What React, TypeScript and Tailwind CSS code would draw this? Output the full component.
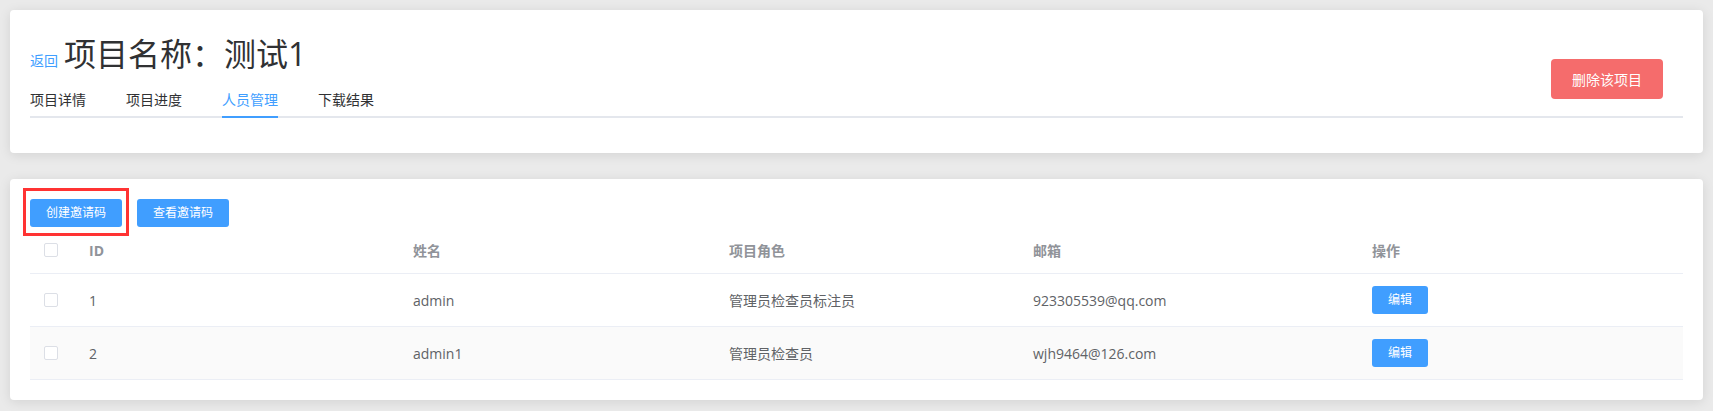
import React from "react";

const rows = [
  { id: "1", name: "admin", role: "管理员检查员标注员", email: "923305539@qq.com", striped: false },
  { id: "2", name: "admin1", role: "管理员检查员", email: "wjh9464@126.com", striped: true },
];

function Checkbox() {
  return <span className="block w-[14px] h-[14px] rounded-[2px] border border-[#dcdfe6] bg-white" />;
}

export default function App() {
  const tabs = ["项目详情", "项目进度", "人员管理", "下载结果"];
  return (
    <div className="min-h-screen bg-[#eaeaea] pt-[10px] font-['Open_Sans','Noto_Sans_CJK_SC',sans-serif]">
      {/* Card 1 */}
      <div className="mx-[10px] bg-white rounded-[4px] shadow-[0_2px_12px_0_rgba(0,0,0,0.1)] px-5 pt-5 pb-[20px]">
        <div className="flex justify-between items-end border-b-2 border-[#e4e7ed] mb-[15px]">
          <div>
            <div className="h-[48px] leading-[48px] flex items-baseline">
              <span className="text-[14px] text-[#409eff] mr-[6px]">返回</span>
              <span className="text-[32px] text-[#303133]">项目名称：测试1</span>
            </div>
            <div className="flex h-[40px] -mb-[2px]">
              {tabs.map((t, i) => (
                <div key={t} className={i === 0 ? "pr-5 h-full" : "px-5 h-full"}>
                  <span
                    className={
                      i === 2
                        ? "h-full flex items-center pt-[4px] text-[14px] text-[#409eff] border-b-2 border-[#409eff]"
                        : "h-full flex items-center pt-[4px] text-[14px] text-[#303133] border-b-2 border-transparent"
                    }
                  >
                    {t}
                  </span>
                </div>
              ))}
            </div>
          </div>
          <button className="mb-[17px] mr-[20px] w-[112px] h-[40px] rounded-[4px] bg-[#f56c6c] text-white text-[14px]">
            删除该项目
          </button>
        </div>
      </div>

      {/* Card 2 */}
      <div className="mx-[10px] mt-[26px] bg-white rounded-[4px] shadow-[0_2px_12px_0_rgba(0,0,0,0.1)] p-5">
        <div className="flex gap-[15px]">
          <div className="relative">
            <button className="w-[92px] h-[28px] rounded-[3px] bg-[#409eff] text-white text-[12px]">创建邀请码</button>
            <div className="absolute left-[-7px] right-[-7px] top-[-11px] bottom-[-9px] border-[3px] border-[#ff3333] pointer-events-none" />
          </div>
          <button className="w-[92px] h-[28px] rounded-[3px] bg-[#409eff] text-white text-[12px]">查看邀请码</button>
        </div>

        <div className="text-[14px]">
          <div className="grid grid-cols-[59px_324px_316px_304px_339px_1fr] h-[47px] items-center border-b border-[#ebeef5] text-[#909399] font-bold">
            <div className="pl-[14px]"><Checkbox /></div>
            <div>ID</div>
            <div>姓名</div>
            <div>项目角色</div>
            <div>邮箱</div>
            <div>操作</div>
          </div>
          {rows.map((r) => (
            <div
              key={r.id}
              className={
                r.striped
                  ? "grid grid-cols-[59px_324px_316px_304px_339px_1fr] h-[53px] items-center border-b border-[#ebeef5] text-[#606266] bg-[#fafafa]"
                  : "grid grid-cols-[59px_324px_316px_304px_339px_1fr] h-[53px] items-center border-b border-[#ebeef5] text-[#606266]"
              }
            >
              <div className="pl-[14px]"><Checkbox /></div>
              <div>{r.id}</div>
              <div>{r.name}</div>
              <div>{r.role}</div>
              <div>{r.email}</div>
              <div>
                <button className="w-[56px] h-[28px] rounded-[3px] bg-[#409eff] text-white text-[12px]">编辑</button>
              </div>
            </div>
          ))}
        </div>
      </div>
    </div>
  );
}
